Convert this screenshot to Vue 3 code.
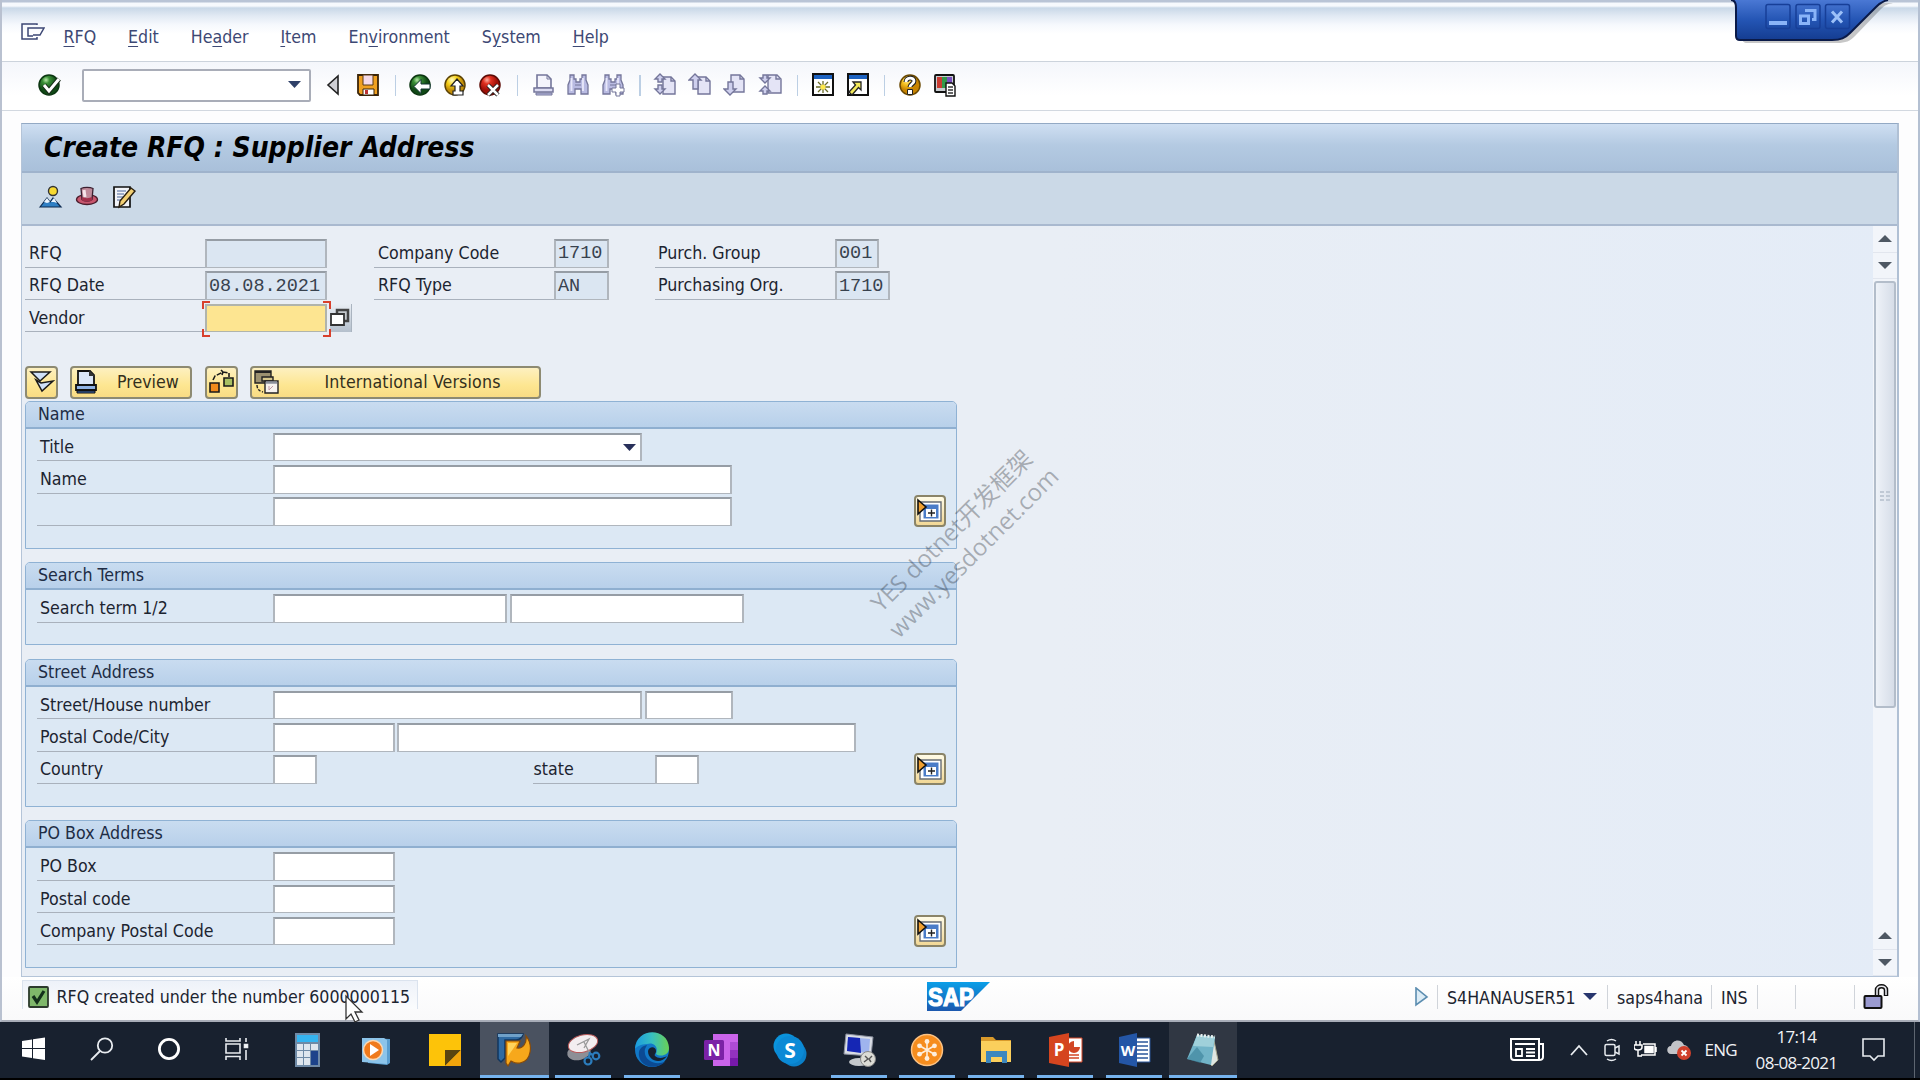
<script setup>
import { ref } from 'vue'

// 菜单项,key 为带下划线的快捷字母位置
const menus = [
  { text: 'RFQ', key: 0 },
  { text: 'Edit', key: 0 },
  { text: 'Header', key: 2 },
  { text: 'Item', key: 0 },
  { text: 'Environment', key: 2 },
  { text: 'System', key: 1 },
  { text: 'Help', key: 0 }
]

const page = '<path d="M9 3h8l4 4v13H9z" fill="#e4e4f6"/><path d="M17 3v4h4" fill="none"/>'
const binoculars = '<path d="M3 1h4v4h2v3h4V5h2V1h4v5l2 5v9h-7v-5H8v5H1v-9l2-5z" fill="#b9bbe2" stroke="#74769a" stroke-width="1.300"/><path d="M4.500 4v13M16 4v13" stroke="#e8e8fb" stroke-width="1.800"/><path d="M8 11h6" stroke="#74769a"/>'

// 标准工具栏图标
const toolIcons = {
  back: '<path d="M16 2v18L6 11z" fill="#cfcfd4" stroke="#222" stroke-width="1.6"/>',
  save: '<path d="M1 1h20v20H3l-2-2z" fill="#f0a020" stroke="#3a2408" stroke-width="1.8"/><path d="M6 1h10v10H6z" fill="#f5dbe8" stroke="#5a3a14"/><path d="M6 15h11v6H6z" fill="#fff" stroke="#3a2408"/><path d="M8 16h3v4H8z" fill="#b33"/>',
  prev: '<circle cx="11" cy="11" r="10" fill="url(#gGreen)" stroke="#0b3510" stroke-width="1.5"/><path d="M5 12.500l7-7v4.500h9v5h-9v4.500z" fill="#fff" stroke="#133" stroke-width="1"/>',
  up: '<circle cx="11" cy="11" r="10" fill="url(#gYellow)" stroke="#5c4304" stroke-width="1.5"/><path d="M13 5l6 7h-3v5h3v4H9v-4h2v-5H7z" fill="#fff" stroke="#222" stroke-width="1.2"/>',
  cancel: '<circle cx="11" cy="11" r="10" fill="url(#gRed)" stroke="#5c0a04" stroke-width="1.5"/><path d="M9 11l10 10M19 11L9 21" stroke="#222" stroke-width="4.500"/><path d="M9 11l10 10M19 11L9 21" stroke="#fff" stroke-width="2.500"/>',
  print: '<path d="M5 1h10l4 4v9H5z" fill="#f4f4fc" stroke="#74769a" stroke-width="1.6"/><path d="M15 1v4h4" fill="none" stroke="#74769a"/><path d="M2 14h19v4H2z" fill="#dcdcf2" stroke="#74769a" stroke-width="1.5"/><path d="M4 19h16v2H4z" fill="#b9bbe2" stroke="#74769a"/>',
  find: binoculars,
  findNext: binoculars + '<path d="M14 10h4v4h4v4h-4v4h-4v-4h-4v-4h4z" fill="#fff" stroke="#74769a"/>',
  first: '<g stroke="#74769a" stroke-width="1.4">' + page + '<path d="M6 0l5 5H8v3H4V5H1zM6 20l5-5H8v-4H4v4H1z" fill="#cfd0ee"/></g>',
  pageUp: '<g stroke="#74769a" stroke-width="1.4">' + page + '<path d="M6 0l6 6H9v9H4V6H0z" fill="#cfd0ee"/></g>',
  pageDown: '<g stroke="#74769a" stroke-width="1.4"><path d="M7 1h9l4 4v13H7z" fill="#e4e4f6"/><path d="M16 1v4h4" fill="none"/><path d="M4 8h5v7h3l-6 6-6-6h4z" fill="#cfd0ee"/></g>',
  last: '<g stroke="#74769a" stroke-width="1.4"><path d="M9 1h9l4 4v14H9z" fill="#e4e4f6"/><path d="M17 1v4h4" fill="none"/><path d="M4 1h4v3h3L6 9 1 4h3zM4 20h4v-3h3l-5-5-5 5h3z" fill="#cfd0ee"/></g>',
  session: '<path d="M1 0h20v21H1z" fill="#fff" stroke="#111" stroke-width="2"/><path d="M2 1h18v4H2z" fill="#1d62c0"/><path d="M11 7v12M4 13h14M6 8l10 10M16 8L6 18" stroke="#6a6c28" stroke-width="1.3"/><circle cx="11" cy="13" r="2.6" fill="#ffe94a"/>',
  shortcut: '<path d="M1 0h20v21H1z" fill="#fff" stroke="#111" stroke-width="2"/><path d="M2 1h18v4H2z" fill="#1d62c0"/><path d="M6 8h8v8l-2.500-2.500L5 21l-3-3 6.500-7z" fill="#f4ea5a" stroke="#222" stroke-width="1.3"/>',
  help: '<circle cx="11" cy="11" r="10" fill="url(#gOrange)" stroke="#6a4800" stroke-width="1.5"/><path d="M7 8c0-5 8-5 8-1 0 3-4 3-4 6" fill="none" stroke="#222" stroke-width="5"/><path d="M7 8c0-5 8-5 8-1 0 3-4 3-4 6" fill="none" stroke="#fff" stroke-width="2.8"/><path d="M8.500 15.500h5v5h-5z" fill="#fff" stroke="#222"/>',
  layout: '<rect x="1" y="1" width="19" height="17" rx="1" fill="#c8ccd0" stroke="#111" stroke-width="1.8"/><path d="M3 3h5v11H3z" fill="#c93b32"/><path d="M8 3h5v11H8z" fill="#33994a"/><path d="M13 3h5v11h-5z" fill="#7a4fc0"/><path d="M12 9h6l3 3v10h-9z" fill="#fff" stroke="#111" stroke-width="1.4"/><path d="M14 13h5M14 16h5M14 19h5" stroke="#333" stroke-width="1.3"/>'
}

const toolGroups = [
  ['back', 'save'],
  ['prev', 'up', 'cancel'],
  ['print', 'find', 'findNext'],
  ['first', 'pageUp', 'pageDown', 'last'],
  ['session', 'shortcut'],
  ['help', 'layout']
]

// 应用工具栏图标
const appIcons = [
  '<path d="M1 21l7-9 3 4 3-4 8 9z" fill="#2f7fc4" stroke="#0d2a50" stroke-width="1.2"/><path d="M5 16l3-4 3 4-3 1zM12 16l3-4 3 5-3-1z" fill="#eef6ff"/><circle cx="14" cy="5" r="4.500" fill="#f7d931" stroke="#333" stroke-width="1.4"/>',
  '<ellipse cx="11" cy="13.500" rx="10.500" ry="5" fill="#c8566e" stroke="#4a1d2c" stroke-width="1.3"/><path d="M5 2.500c3-1.500 9-1.500 12 0l-1 11c-2 2-8 2-10 0z" fill="#c08a9a" stroke="#3d2030" stroke-width="1.3"/><path d="M8 4l1 7" stroke="#f5e4ea" stroke-width="3"/><path d="M6 11c3 1.500 7 1.500 10 0v3.500c-3 1.500-7 1.500-10 0z" fill="#a22f4a"/>',
  '<path d="M1 1h16v20H1z" fill="#f2f4f8" stroke="#111" stroke-width="1.7"/><path d="M4 5h9M4 8h7M4 11h6M4 14h4" stroke="#8294b8" stroke-width="1.3"/><path d="M18 2l4 3L11 18l-5 3 1-6z" fill="#f2cf73" stroke="#2a2010" stroke-width="1.400"/>'
]

// 抬头字段,按列分组
const headerCols = ref([
  {
    cls: 'col-a',
    rows: [
      { label: 'RFQ', value: '', w: 'w10' },
      { label: 'RFQ Date', value: '08.08.2021', w: 'w10' },
      { label: 'Vendor', value: '', w: 'w10', active: true }
    ]
  },
  {
    cls: 'col-b',
    rows: [
      { label: 'Company Code', value: '1710', w: 'w4' },
      { label: 'RFQ Type', value: 'AN', w: 'w4' }
    ]
  },
  {
    cls: 'col-c',
    rows: [
      { label: 'Purch. Group', value: '001', w: 'w3' },
      { label: 'Purchasing Org.', value: '1710', w: 'w4' }
    ]
  }
])

// 地址表单分组
const groups = ref([
  {
    title: 'Name',
    more: true,
    rows: [
      { label: 'Title', fields: ['f30'], select: true },
      { label: 'Name', fields: ['f40'] },
      { label: '', fields: ['f40'] }
    ]
  },
  {
    title: 'Search Terms',
    rows: [{ label: 'Search term 1/2', fields: ['f20', 'f20'] }]
  },
  {
    title: 'Street Address',
    more: true,
    rows: [
      { label: 'Street/House number', fields: ['f30', 'f7'] },
      { label: 'Postal Code/City', fields: ['f10', 'f49'] },
      { label: 'Country', fields: ['f3'], extra: 'state' }
    ]
  },
  {
    title: 'PO Box Address',
    more: true,
    rows: [
      { label: 'PO Box', fields: ['f10'] },
      { label: 'Postal code', fields: ['f10'] },
      { label: 'Company Postal Code', fields: ['f10'] }
    ]
  }
])

// 任务栏应用,36x36 画布
const apps = [
  { name: 'calc', svg: '<path d="M6 1h25v34H6z" fill="#6f8aa6"/><path d="M8 3h21v7H8z" fill="#35b4f0"/><g fill="#dfe6ee"><path d="M8 12h6v6H8zM15 12h6v6h-6zM22 12h7v6h-7zM8 19h6v6H8zM15 19h6v6h-6zM8 26h6v7H8zM15 26h6v7h-6z"/></g><path d="M22 19h7v14h-7z" fill="#1d438a"/>' },
  { name: 'media', svg: '<path d="M10 6l22 1v24l-3 2-19-2z" fill="#5a9ed0"/><path d="M4 6h22l3 2v24L4 30z" fill="#8cc4ea"/><circle cx="15" cy="18" r="9.500" fill="#f07a1c" stroke="#fbd9b4" stroke-width="1.500"/><path d="M12 12l9 6-9 6z" fill="#fff"/>' },
  { name: 'notes', svg: '<path d="M2 2h32v32H2z" fill="#fdc309"/><path d="M18 18h16L18 34z" fill="#5a4510"/><path d="M34 18v16H18z" fill="#f2a50c"/>' },
  { name: 'sap', state: 'active', svg: '<path d="M2 2h25c-1 4-3 6-7 6H9v18l-4 4-3-3z" fill="#2f6aa2" stroke="#12365e" stroke-width="1.500"/><path d="M2 2h25l-2 3H2z" fill="#6fa0c8"/><path d="M10 9h14l-3 7c6 1 10-5 9-12 7 8 6 25-6 27-5 1-7-1-9-2l-3 5-2-3z" fill="#f7a81b" stroke="#8a4c08" stroke-width="1.200"/><path d="M12 11h9l-4 6-5 7z" fill="#ffd45c"/>' },
  { name: 'snip', state: 'open', svg: '<ellipse cx="14" cy="20" rx="12" ry="8" fill="#8d8f96" transform="rotate(-15 14 20)"/><ellipse cx="18" cy="11.500" rx="15" ry="8.500" fill="#f3eef0" stroke="#b85a5a" transform="rotate(-15 18 11.500)"/><path d="M12 13l12-6-5 9M19 10l5 10" fill="none" stroke="#999" stroke-width="1.300"/><g fill="none" stroke="#2b7cbc" stroke-width="2.200"><circle cx="23" cy="29" r="3.500"/><circle cx="31" cy="24" r="3.300"/><path d="M24 25l1-5M28 23l-4-2"/></g>' },
  { name: 'edge', state: 'open', svg: '<circle cx="18" cy="18" r="17" fill="#1178c8"/><path d="M1 17C2-5 34-5 35 16c0 8-9 9-13 6 3-8-3-12-9-10C7 12 2 15 1 17z" fill="url(#gEdge)"/><path d="M11 17c-2 10 8 17 20 13-8 8-24 6-26-6-1-7 3-10 8-11z" fill="#0b4a94"/><path d="M14 19c1-5 8-5 8 0 0 3-2 3-1 5 3 3 9 2 12 0-6 9-19 5-19-5z" fill="#172030"/>' },
  { name: 'onenote', svg: '<path d="M10 2h25v32H10z" fill="#ca64ea"/><path d="M27 10h8v8h-8z" fill="#ae4bd5"/><path d="M27 18h8v8h-8z" fill="#9332bf"/><path d="M27 26h8v8h-8z" fill="#7719aa"/><rect x="1" y="8" width="20" height="20" rx="1.500" fill="#7b22a6"/><text x="11" y="24" font-size="16" font-weight="bold" fill="#fff" text-anchor="middle">N</text>' },
  { name: 'skype', svg: '<circle cx="14" cy="14" r="12.500" fill="#0a93dc"/><circle cx="22" cy="22" r="12.500" fill="#0a7fc8"/><circle cx="18" cy="18" r="14" fill="#0b8ad6"/><text x="18" y="25.500" font-size="21" font-weight="bold" fill="#fff" text-anchor="middle">S</text>' },
  { name: 'rdp', state: 'open', svg: '<path d="M5 2l27 3-2 19-27-2z" fill="#d8dce4" stroke="#8c92a0"/><path d="M7 5l22 2-1 14-22-2z" fill="#9fb4ee"/><path d="M7 5l12 1 1 15-14-2z" fill="#1526b4"/><ellipse cx="18" cy="30" rx="10" ry="4" fill="#c4c8cc"/><circle cx="27" cy="27" r="7.500" fill="#dcdcd6" stroke="#888"/><path d="M23 30l4-3-3-3M31 24l-3 3 2 3" fill="none" stroke="#555" stroke-width="1.400"/>' },
  { name: 'gotomeeting', state: 'open', svg: '<circle cx="18" cy="18" r="15.500" fill="#f68d1e" stroke="#fbc284" stroke-width="1.500"/><g stroke="#fdeedd" stroke-width="1.600"><path d="M18 10v16M11 14l14 8M11 22l14-8"/></g><g fill="#fdeedd"><circle cx="18" cy="9.500" r="2.400"/><circle cx="18" cy="26.500" r="2.400"/><circle cx="10.500" cy="13.800" r="2.400"/><circle cx="25.500" cy="22.200" r="2.400"/><circle cx="10.500" cy="22.200" r="2.400"/><circle cx="25.500" cy="13.800" r="2.400"/></g>' },
  { name: 'explorer', state: 'open', svg: '<path d="M3 5h12l3 3h15v5H3z" fill="#d99a2b"/><path d="M3 9h30v21H3z" fill="#fbcf5c"/><path d="M8 31V19h21v12h-5v-6H13v6z" fill="#3d87be"/>' },
  { name: 'ppt', state: 'open', svg: '<path d="M18 6h17v24H18z" fill="#fff" stroke="#d24726"/><path d="M27 9v6h6a6 6 0 1 1-6-6z" fill="#d24726"/><path d="M21 23h11M21 26h11" stroke="#d24726" stroke-width="1.500"/><path d="M2 5l20-4v34L2 31z" fill="#d5451f"/><text x="12" y="24" font-size="17" font-weight="bold" fill="#fff" text-anchor="middle">P</text>' },
  { name: 'word', state: 'open', svg: '<path d="M18 6h16v24H18z" fill="#fff" stroke="#2b579a"/><path d="M21 10h11M21 14h11M21 18h11M21 22h11M21 26h11" stroke="#2b579a" stroke-width="1.700"/><path d="M3 5l18-4v34L3 31z" fill="#2456a6"/><text x="12" y="24" font-size="15" font-weight="bold" fill="#fff" text-anchor="middle">W</text>' },
  { name: 'notepad', state: 'focus', svg: '<path d="M28 4l5 24-6 6-5-5z" fill="#dfe6e2" stroke="#a8a890"/><path d="M12 3l18 2-4 28L2 27z" fill="#72b4c8"/><path d="M12 3l18 2-2 10-20-1z" fill="#9fd0da"/><path d="M2 27l10-12 7 9-4 7z" fill="#397f98" opacity=".6"/><path d="M12 3l18 2" stroke="#e8f0f0" stroke-width="3" stroke-dasharray="2 1.500"/>' }
]
</script>

<template>
  <div class="screen">
    <!-- 图标共用的渐变 -->
    <svg class="defs" width="0" height="0">
      <defs>
        <radialGradient id="gGreen" cx=".35" cy=".25"><stop offset="0" stop-color="#b8e8a8" /><stop offset=".35" stop-color="#3c9038" /><stop offset="1" stop-color="#104a16" /></radialGradient>
        <radialGradient id="gYellow" cx=".35" cy=".25"><stop offset="0" stop-color="#fffbc0" /><stop offset=".5" stop-color="#f7d21c" /><stop offset="1" stop-color="#c48f08" /></radialGradient>
        <radialGradient id="gRed" cx=".35" cy=".25"><stop offset="0" stop-color="#ffb0a0" /><stop offset=".4" stop-color="#e03020" /><stop offset="1" stop-color="#a01008" /></radialGradient>
        <radialGradient id="gOrange" cx=".35" cy=".25"><stop offset="0" stop-color="#fff2a0" /><stop offset=".5" stop-color="#f5c020" /><stop offset="1" stop-color="#c88400" /></radialGradient>
        <linearGradient id="gEdge" x1="0" x2="1"><stop offset="0" stop-color="#1a9ae0" /><stop offset=".5" stop-color="#38c0c0" /><stop offset="1" stop-color="#6ad054" /></linearGradient>
        <linearGradient id="gSap" x1="0" x2="0" y1="0" y2="1"><stop offset="0" stop-color="#0a9fe8" /><stop offset="1" stop-color="#1c58ae" /></linearGradient>
        <linearGradient id="gWin" x1="0" x2="0" y1="0" y2="1"><stop offset="0" stop-color="#4a78d4" /><stop offset=".5" stop-color="#2455b4" /><stop offset="1" stop-color="#143c90" /></linearGradient>
      </defs>
    </svg>

    <div class="window">
      <div class="menubar">
        <svg class="menu-icon" width="24" height="20" viewBox="0 0 24 20" fill="none" stroke="#3c4774" stroke-width="1.5">
          <path d="M16 2V1H1v15h15v-2" />
          <path d="M12 5H7v8h5M10 5h13l-4 7h-7" />
        </svg>
        <span v-for="m in menus" :key="m.text" class="menu-item">{{ m.text.slice(0, m.key) }}<u>{{ m.text[m.key] }}</u>{{ m.text.slice(m.key + 1) }}</span>
      </div>

      <div class="toolbar">
        <svg class="ok-icon" width="24" height="24" viewBox="-1 -1 24 24">
          <circle cx="11" cy="11" r="10" fill="url(#gGreen)" stroke="#0b3510" stroke-width="1.5" />
          <path d="M6 11l5 6L21 5" fill="none" stroke="#1a2a1a" stroke-width="5" />
          <path d="M6 11l5 6L21 5" fill="none" stroke="#fff" stroke-width="3" />
        </svg>
        <div class="command">
          <svg width="14" height="8" viewBox="0 0 14 8"><path d="M0 0h13L6.500 7z" fill="#2f4068" /></svg>
        </div>
        <template v-for="(g, gi) in toolGroups" :key="gi">
          <i v-if="gi" class="sep"></i>
          <span v-for="name in g" :key="name" class="tool">
            <svg width="24" height="24" viewBox="-1 -1 24 24" v-html="toolIcons[name]"></svg>
          </span>
        </template>
      </div>

      <div class="main">
        <div class="title">Create RFQ : Supplier Address</div>
        <div class="app-toolbar">
          <svg v-for="(icon, i) in appIcons" :key="i" width="25" height="24" viewBox="-1 -1 25 24" v-html="icon"></svg>
        </div>

        <div class="body">
          <div class="form">
            <div class="header-fields">
              <div v-for="col in headerCols" :key="col.cls" :class="col.cls">
                <div v-for="row in col.rows" :key="row.label" class="row">
                  <span class="label head-label">{{ row.label }}</span>
                  <span class="field readonly" :class="[row.w, { active: row.active }]">
                    {{ row.value }}
                    <svg v-if="row.active" class="focus-frame" width="130" height="36" viewBox="0 0 130 36" fill="none" stroke="#d8402c" stroke-width="2">
                      <path d="M1 8V1h7M121 1h7v7M1 28v7h7M121 35h7v-7" />
                    </svg>
                  </span>
                  <span v-if="row.active" class="f4">
                    <svg width="20" height="20" viewBox="0 0 20 20">
                      <path d="M7 2h11v11H7z" fill="#c4c8cc" stroke="#444" stroke-width="2.500" />
                      <path d="M1 6h13v11H1z" fill="#fff" stroke="#333" stroke-width="1.800" />
                    </svg>
                  </span>
                </div>
              </div>
            </div>

            <div class="buttons">
              <span class="btn btn-icon">
                <svg width="26" height="24" viewBox="0 0 26 24" fill="#cfe0f8" stroke="#1a1a1a" stroke-width="1.500">
                  <path d="M2 2h19l-10 9z" /><path d="M7 10l5 3 12-2-11 10z" />
                </svg>
              </span>
              <span class="btn btn-preview">
                <svg width="24" height="26" viewBox="0 0 24 26">
                  <path d="M4 2h12l4 4v12H4z" fill="#dbe6f8" stroke="#111" stroke-width="1.800" />
                  <path d="M15 1v6h6" fill="#333" />
                  <path d="M2 16h20v5H2z" fill="#8fb2e4" stroke="#111" stroke-width="1.800" />
                  <path d="M3 22h18v2H3z" fill="#3b6ab4" stroke="#111" />
                </svg>
                <b>Preview</b>
              </span>
              <span class="btn btn-icon btn-link">
                <svg width="26" height="26" viewBox="0 0 26 26" stroke="#1a1a1a" stroke-width="1.600">
                  <path d="M1 14h9v9H1z" fill="#f08a1c" /><path d="M15 9h9v8h-9z" fill="#a8bf62" />
                  <path d="M4 11l2-4 8-4 6 1v4M14 3l-2-2M14 3l-1 3" fill="none" stroke-dasharray="5 1.500" />
                </svg>
              </span>
              <span class="btn btn-intl">
                <svg width="26" height="26" viewBox="0 0 26 26" stroke="#222" stroke-width="1.400">
                  <path d="M1 2h16v12H1z" fill="#9c9170" /><path d="M1 3h16" stroke-width="2" />
                  <path d="M8 8h11v4H8z" fill="#d8c88c" />
                  <path d="M11 12h13v12H11z" fill="#f6f2ee" /><path d="M12 13.500h11" stroke="#8a8f9a" stroke-width="2.500" />
                  <path d="M15 17v4l4-4" fill="none" stroke="#c09aa4" stroke-width="1" /><path d="M3 16c0 4 2 6 6 7" fill="none" stroke-dasharray="3 1.500" />
                </svg>
                <b>International Versions</b>
              </span>
            </div>

            <div v-for="g in groups" :key="g.title" class="group">
              <div class="group-title">{{ g.title }}</div>
              <div class="group-body">
                <div v-for="(row, ri) in g.rows" :key="ri" class="row">
                  <span class="label">{{ row.label }}</span>
                  <span v-for="(f, fi) in row.fields" :key="fi" class="field" :class="f">
                    <svg v-if="row.select" width="13" height="8" viewBox="0 0 13 8"><path d="M0 0h13L6.500 7z" fill="#28305a" /></svg>
                  </span>
                  <template v-if="row.extra">
                    <span class="label extra">{{ row.extra }}</span>
                    <span class="field f3"></span>
                  </template>
                  <span v-if="g.more && ri === g.rows.length - 1" class="more">
                    <svg width="28" height="27" viewBox="0 0 28 27">
                      <path d="M4 5h21v19H4z" fill="#fff" stroke="#666c74" stroke-width="1.400" />
                      <path d="M7.500 7.500h15v14h-15z" fill="#4a7cc8" />
                      <path d="M10 12h10v8H10z" fill="#fff" />
                      <path d="M12 16h7M15.500 12.500v7" stroke="#222" stroke-width="1.400" />
                      <path d="M2 3l8 7-8 7z" fill="#f0a030" stroke="#111" stroke-width="1.600" />
                    </svg>
                  </span>
                </div>
              </div>
            </div>
          </div>

          <div class="scrollbar">
            <i class="arrow up"></i>
            <i class="arrow down"></i>
            <div class="thumb"><i class="grip"></i></div>
            <div class="rest"></div>
            <i class="arrow up"></i>
            <i class="arrow down"></i>
          </div>
        </div>
      </div>

      <div class="status">
        <div class="message">
          <svg width="22" height="22" viewBox="0 0 22 22">
            <rect x="1" y="1" width="19" height="20" rx="1" fill="#7fb86a" stroke="#2c3a2c" stroke-width="1.800" />
            <path d="M5 10l4 6 7-11" fill="none" stroke="#13301a" stroke-width="3.200" />
          </svg>
          <span>RFQ created under the number 6000000115</span>
        </div>
        <div class="logo">
          <svg width="64" height="30" viewBox="0 0 64 30">
            <path d="M0 0h63L34 29H0z" fill="url(#gSap)" />
            <text x="1" y="24" font-size="25" font-weight="bold" fill="#fff" stroke="#fff" stroke-width="1.200" textLength="46" lengthAdjust="spacingAndGlyphs">SAP</text>
          </svg>
        </div>
        <div class="session">
          <span class="cell c-play">
            <svg width="14" height="20" viewBox="0 0 14 20"><path d="M1 1v17l11-8z" fill="#dcecf6" stroke="#5b8db0" stroke-width="1.600" /></svg>
          </span>
          <span class="cell c-user">
            <b>S4HANAUSER51</b>
            <svg width="14" height="8" viewBox="0 0 14 8"><path d="M0 0h14L7 7z" fill="#28366e" /></svg>
          </span>
          <span class="cell c-server"><b>saps4hana</b></span>
          <span class="cell c-ins"><b>INS</b></span>
          <span class="cell c-e1"></span>
          <span class="cell c-e2"></span>
          <span class="cell c-lock">
            <svg width="27" height="26" viewBox="0 0 27 26">
              <path d="M14 12V6c0-5 9-5 9 0v6" fill="none" stroke="#111" stroke-width="4.500" />
              <path d="M14 12V6c0-5 9-5 9 0v5" fill="none" stroke="#e8e8ee" stroke-width="1.600" />
              <rect x="1.500" y="12" width="17" height="12" rx="1" fill="#9a9ad0" stroke="#111" stroke-width="2" />
            </svg>
          </span>
        </div>
      </div>
    </div>

    <div class="taskbar">
      <div class="sys">
        <svg width="24" height="24" viewBox="0 0 24 24" fill="#fff"><path d="M0 4l10-1.500V11H0zM11 2.300L23 .5V11H11zM0 12h10v9L0 19.500zM11 12h12v11l-12-1.700z" /></svg>
        <svg width="24" height="24" viewBox="0 0 24 24" fill="none" stroke="#e8ecf0" stroke-width="1.800"><circle cx="15" cy="8.500" r="7.200" /><path d="M10 14l-9 9" /></svg>
        <svg width="24" height="24" viewBox="0 0 24 24" fill="none" stroke="#fff" stroke-width="2.800"><circle cx="12" cy="12" r="9.600" /></svg>
        <svg width="24" height="24" viewBox="0 0 24 24" fill="none" stroke="#e8ecf0" stroke-width="1.600"><path d="M1 1v3h14V1M1 7h14v9H1zM1 23v-3.500h14V23M21 1v4M21 13v10" /><path d="M19.500 7.500h3v3h-3z" fill="#fff" /></svg>
      </div>
      <div class="apps">
        <div v-for="a in apps" :key="a.name" class="app" :class="a.state">
          <svg width="36" height="36" viewBox="0 0 36 36" v-html="a.svg"></svg>
        </div>
      </div>
      <div class="tray">
        <svg class="t-news" width="35" height="24" viewBox="0 0 35 24" fill="none" stroke="#fff" stroke-width="2"><path d="M1 1h28v21H4c-2 0-3-1-3-3zM29 6h4v13c0 2-1 3-4 3M5 6h20" /><path d="M6 11h6v7H6zM16 11h9M16 14.500h9M16 18h9" stroke-width="1.800" /></svg>
        <svg class="t-up" width="18" height="12" viewBox="0 0 18 12" fill="none" stroke="#e8ecf0" stroke-width="1.800"><path d="M1 11l8-9 8 9" /></svg>
        <svg class="t-cam" width="17" height="24" viewBox="0 0 17 24" fill="none" stroke="#e8ecf0" stroke-width="1.500"><rect x="1" y="6.500" width="10" height="11" rx="1.500" /><path d="M11 10l4-2v8l-4-2M3 3c3-2 6-2 9 0M3 21c3 2 6 2 9 0" /></svg>
        <svg class="t-bat" width="24" height="18" viewBox="0 0 24 18" fill="none" stroke="#fff" stroke-width="1.500"><path d="M9 3h12v11H7M22 6v5" /><path d="M11 5.500h8v6h-8z" fill="#fff" /><path d="M2 0v4M6 0v4M0 4h8v2c0 4-8 4-8 0zM4 9v6h4" /></svg>
        <svg class="t-cloud" width="26" height="22" viewBox="0 0 26 22"><path d="M4 15c-5 0-5-8 0-8 1-6 10-8 13-1 6 0 6 9 0 9z" fill="#c2c4c8" /><circle cx="17" cy="14" r="7" fill="#d0402c" /><path d="M14.500 11.500l5 5M19.500 11.500l-5 5" stroke="#fff" stroke-width="1.800" /></svg>
        <span class="t-lang">ENG</span>
        <div class="t-clock"><span>17:14</span><span>08-08-2021</span></div>
        <svg class="t-note" width="24" height="24" viewBox="0 0 24 24" fill="none" stroke="#e8ecf0" stroke-width="1.600"><path d="M1 1h21v17h-6l-4 4-4-4H1z" /></svg>
      </div>
    </div>
    <div class="edge"></div>

    <!-- 浮在窗口上方的内容 -->
    <svg class="win-ctrl" width="170" height="46" viewBox="0 0 170 46">
      <path d="M8 3c3 0 6 2 6 8v27c0 3 2 5 5 5h90c9 0 13-2 18-7l26-27c4-4 7-5 12-6z" fill="#000" opacity=".22" />
      <path d="M3 0c4 0 5 3 5 8v28c0 3 1 4 4 4h92c9 0 13-2 18-7l26-26c4-4 7-6 12-7z" fill="url(#gWin)" />
      <path d="M3 0c4 0 5 3 5 8v28c0 3 1 4 4 4h92c9 0 13-2 18-7l26-26c4-4 7-6 12-7" fill="none" stroke="#0a1a48" stroke-width="2" />
      <g fill="none" stroke="#173f98" stroke-width="1.500">
        <rect x="38" y="4.500" width="24" height="24" rx="2" /><rect x="68" y="4.500" width="24" height="24" rx="2" /><rect x="97.500" y="4.500" width="24" height="24" rx="2" />
      </g>
      <path d="M41 21h18v4H41z" fill="#8ab4f8" />
      <path d="M77 10.500h10v9h-3M72.500 16h8v7.500h-8z" fill="none" stroke="#8ab4f8" stroke-width="3" />
      <path d="M104 11.500l10 11M114 11.500l-10 11" stroke="#9cc0f8" stroke-width="3" />
    </svg>
    <div class="watermark"><span>YES dotnet开发框架</span><span>www.yesdotnet.com</span></div>
    <svg class="cursor" width="20" height="30" viewBox="0 0 20 30"><path d="M2 2v23l5-5 4 8 4-2-4-8h7z" fill="#fff" stroke="#333" stroke-width="1.300" /></svg>
  </div>
</template>

<style>
body {
  margin: 0;
  background: #000;
}
</style>

<style scoped>
.screen {
  position: relative;
  width: 1920px;
  height: 1080px;
  overflow: hidden;
  background: #000;
  display: flex;
  flex-direction: column;
  font-family: "DejaVu Sans Condensed", "Noto Sans", sans-serif;
  font-size: 17.650px;
  color: #1c2430;
}

.defs {
  position: absolute;
}

svg {
  display: block;
  flex-shrink: 0;
}

b {
  font-weight: normal;
}

.window {
  box-sizing: border-box;
  height: 1022px;
  display: flex;
  flex-direction: column;
  background: #fdfdfe;
  border-left: 2px solid #b9c1d0;
  border-right: 2px solid #b4c0d2;
  border-bottom: 2px solid #a8adb8;
}

.menubar {
  box-sizing: border-box;
  height: 62px;
  padding: 13px 0 0 19px;
  display: flex;
  align-items: center;
  background: linear-gradient(#b9c4d6 0 2px, #f6f9fd 3px 6px, #c9d8e8 8px, #e2eaf4 16px, #f6f9fd 25px, #fff 34px);
  border-bottom: 1px solid #ccd3dc;
}

.menu-icon {
  margin: -9px 18.500px 0 0;
}

.menu-item {
  margin-right: 31.900px;
  color: #3d4874;
}

.menu-item u {
  text-underline-offset: 3px;
}

.toolbar {
  box-sizing: border-box;
  height: 49px;
  padding: 0 0 2px 35px;
  display: flex;
  align-items: center;
  background: linear-gradient(#f4f6fb, #fff 70%);
  border-bottom: 1px solid #d2d8e0;
}

.command {
  box-sizing: border-box;
  width: 229px;
  height: 33px;
  margin: 0 4.500px 0 21px;
  padding-right: 7px;
  display: flex;
  align-items: center;
  justify-content: flex-end;
  background: #fff;
  border: 2px solid #a9adb8;
  border-radius: 2px;
}

.tool {
  width: 35px;
  display: flex;
  justify-content: center;
}

.sep {
  box-sizing: border-box;
  width: 17.400px;
  height: 21px;
  padding-left: 9px;
  background: #bccfe4 content-box;
  border-right: 7px solid transparent;
  background-clip: content-box;
}

.main {
  margin: 12px 19px 0 19px;
  height: 854px;
  box-sizing: border-box;
  display: flex;
  flex-direction: column;
  border: 1px solid #b4c4d8;
  border-top-color: #93a9c4;
  border-right: 2px solid #b0c0d4;
}

.title {
  box-sizing: border-box;
  flex-shrink: 0;
  height: 49px;
  padding: 0 0 0 22px;
  display: flex;
  align-items: center;
  font-size: 28px;
  font-weight: bold;
  font-style: italic;
  color: #000;
  background: linear-gradient(#cfdff2, #b4cae2 45%, #a9c0da);
  border-bottom: 2px solid #9fb3cc;
}

.app-toolbar {
  box-sizing: border-box;
  flex-shrink: 0;
  height: 53px;
  padding: 0 0 3px 16px;
  display: flex;
  align-items: center;
  gap: 12px;
  background: #cbd9e7;
  border-bottom: 2px solid #a9b9cf;
}

.body {
  flex: 1;
  min-height: 0;
  display: flex;
  justify-content: space-between;
  background: linear-gradient(90deg, #e9eef5 55%, #e4ecf7);
}

.form {
  padding: 13.200px 0 0 3px;
  width: 932px;
}

.header-fields {
  display: flex;
  height: 129px;
}

.row {
  height: 32.270px;
  display: flex;
  align-items: flex-start;
}

.label {
  box-sizing: border-box;
  flex-shrink: 0;
  width: 236px;
  height: 28.500px;
  padding-left: 3px;
  line-height: 28px;
  white-space: nowrap;
  border-bottom: 1.500px solid #a9b1bc;
}

.head-label {
  width: 180px;
  padding-left: 4px;
}

.col-a {
  width: 327px;
}

.col-b {
  margin-left: 22px;
}

.col-c {
  margin-left: 44px;
}

.col-c .label {
  padding-left: 3px;
}

.field {
  box-sizing: border-box;
  flex-shrink: 0;
  height: 28.500px;
  margin-right: 2.500px;
  padding: 0 4px 0 3px;
  display: flex;
  align-items: center;
  justify-content: flex-end;
  background: #fff;
  border: 2px solid #b0b6bd;
  border-top-color: #969da5;
  border-bottom-width: 1px;
}

.readonly {
  position: relative;
  justify-content: flex-start;
  padding-left: 2px;
  font-family: "Liberation Mono", monospace;
  font-size: 18.500px;
  color: #38424e;
  background: #dbe6f2;
  white-space: nowrap;
}

.active {
  background: #fde591;
  border-color: #b0b4ac;
}

.focus-frame {
  position: absolute;
  left: -5px;
  top: -5px;
}

.f4 {
  width: 24px;
  height: 28px;
  display: flex;
  align-items: center;
  background: linear-gradient(#e9eef4, #b4bfcc);
  border-right: 1px solid #aab4c0;
}

.w10 { width: 122px; }
.w4 { width: 54.500px; }
.w3 { width: 43.500px; }
.f3 { width: 43.500px; }
.f7 { width: 88px; }
.f10 { width: 121.500px; }
.f20 { width: 234px; }
.f30 { width: 369px; }
.f40 { width: 459px; }
.f49 { width: 459px; }

.buttons {
  display: flex;
  height: 32.350px;
  margin-top: -2px;
  padding-bottom: 2px;
}

.btn {
  box-sizing: border-box;
  height: 32.500px;
  padding-left: 2px;
  display: flex;
  align-items: center;
  white-space: nowrap;
  background: linear-gradient(#fdf0c0, #fde691 60%, #f9dc84);
  border: 2px solid #8d8a72;
  border-radius: 4px;
  color: #33301c;
}

.btn-icon { width: 32.500px; }
.btn-preview { width: 122px; margin-left: 12.500px; }
.btn-preview b { margin-left: 19px; }
.btn-link { margin-left: 13px; }
.btn-intl { width: 291px; margin-left: 12px; }
.btn-intl b { margin-left: 45px; letter-spacing: 0.150px; }

.group {
  box-sizing: border-box;
  margin-bottom: 13.350px;
  border: 1.500px solid #8fb2d4;
  border-radius: 5px 5px 0 0;
  background: #dce8f4;
}

.group-title {
  box-sizing: border-box;
  height: 27px;
  padding-left: 12px;
  line-height: 25px;
  color: #202c44;
  border-bottom: 2px solid #8fafd0;
  border-radius: 4px 4px 0 0;
  background: linear-gradient(#c9dcf0, #b8d0ea);
}

.group-body {
  padding: 4.300px 0 17.900px 11px;
}

.extra {
  width: 122.500px;
  margin-left: 213.500px;
  padding-left: 1px;
}

.more {
  box-sizing: border-box;
  width: 32px;
  height: 32px;
  margin: -2px 10.500px 0 auto;
  background: linear-gradient(#fffbe6, #f2d896);
  border: 2px solid #8a8468;
  border-radius: 4px;
}

.scrollbar {
  width: 24px;
  display: flex;
  flex-direction: column;
  align-items: center;
  background: #f2f5fa;
}

.arrow {
  box-sizing: border-box;
  flex-shrink: 0;
  height: 26.500px;
  width: 24px;
  display: flex;
  align-items: center;
  justify-content: center;
  border-bottom: 1px solid #e2e6ee;
}

.arrow::after {
  content: "";
  border: 7px solid transparent;
}

.up::after {
  border-top: 0;
  border-bottom: 7px solid #4e5863;
}

.down::after {
  border-bottom: 0;
  border-top: 7px solid #4e5863;
}

.thumb {
  box-sizing: border-box;
  flex-shrink: 0;
  width: 22px;
  height: 427px;
  margin-top: 2px;
  padding-top: 4px;
  display: flex;
  align-items: center;
  justify-content: center;
  background: linear-gradient(90deg, #eef2f8, #d6dde8);
  border: 2px solid #b3bdca;
  border-radius: 3px;
}

.grip {
  width: 10px;
  height: 11px;
  background:
    linear-gradient(90deg, transparent 4px, #e3e8f0 4px 6px, transparent 6px),
    repeating-linear-gradient(#c0c9d5 0 2px, transparent 2px 4px);
}

.rest {
  flex: 1;
}

.status {
  flex: 1;
  display: flex;
  background: linear-gradient(#fff, #f9f9fa);
}

.message {
  box-sizing: border-box;
  width: 396px;
  height: 29px;
  margin: 3px 0 0 20px;
  padding: 4px 0 0 5px;
  display: flex;
  align-items: center;
  gap: 6.500px;
  white-space: nowrap;
  background: linear-gradient(#eef2f9, #fbfcfd);
  border: 1px solid #dbe3ee;
  border-bottom: 0;
}

.logo {
  margin: 5px 0 0 509px;
  font-family: "Liberation Sans", sans-serif;
}

.session {
  margin-left: 424px;
  display: flex;
  height: 24px;
  margin-top: 8px;
}

.cell {
  box-sizing: border-box;
  display: flex;
  align-items: center;
  border-right: 1px solid #d0d4da;
}

.cell b {
  padding-top: 2px;
}

.c-play { width: 23px; }
.c-user { width: 170px; padding-left: 9px; justify-content: space-between; padding-right: 10px; }
.c-server { width: 104px; padding-left: 9px; }
.c-ins { width: 46px; padding-left: 9px; }
.c-e1 { width: 38px; }
.c-e2 { width: 59px; }
.c-lock { width: 40px; padding-left: 8px; border: 0; }

.taskbar {
  height: 56px;
  display: flex;
  background: #18212f;
  font-family: "Open Sans", "Noto Sans", sans-serif;
}

.edge {
  height: 2px;
  background: #000;
}

.sys {
  width: 273px;
  box-sizing: border-box;
  padding: 0 0 2px 22px;
  display: flex;
  align-items: center;
  gap: 43.500px;
}

.apps {
  display: flex;
}

.app {
  box-sizing: border-box;
  width: 68.900px;
  padding: 10px 0 0;
  display: flex;
  justify-content: center;
  background: linear-gradient(#76b3ee, #76b3ee) no-repeat center bottom / 0 3px;
}

.open {
  background-size: 56px 3px;
}

.active.app {
  background-color: #4a5260;
  background-size: 100% 3px;
}

.focus {
  background-color: #303743;
  background-size: 100% 3px;
}

.tray {
  flex: 1;
  display: flex;
  align-items: center;
  color: #f0f2f5;
  font-size: 17px;
  border-right: 1px solid #5d6570;
  margin-right: 5px;
  letter-spacing: -0.700px;
}

.t-news { margin-left: 273px; }
.t-up { margin-left: 25px; }
.t-cam { margin-left: 16px; }
.t-bat { margin-left: 13px; }
.t-cloud { margin-left: 9px; }
.t-lang { margin-left: 11px; width: 34px; padding-bottom: 2px; }

.t-clock {
  width: 84px;
  margin-left: 16px;
  padding-bottom: 1px;
  display: flex;
  flex-direction: column;
  align-items: center;
  line-height: 25.500px;
}

.t-note { margin-left: 24px; }

.win-ctrl {
  position: absolute;
  left: 1728px;
  top: 0;
}

.watermark {
  position: absolute;
  left: 842px;
  top: 510px;
  width: 240px;
  display: flex;
  flex-direction: column;
  align-items: center;
  line-height: 31px;
  font-family: "Open Sans", "Noto Sans CJK SC", sans-serif;
  font-size: 24px;
  color: rgba(40, 44, 52, 0.35);
  transform: rotate(-45deg);
  white-space: nowrap;
}

.cursor {
  position: absolute;
  left: 344px;
  top: 994px;
}
</style>
